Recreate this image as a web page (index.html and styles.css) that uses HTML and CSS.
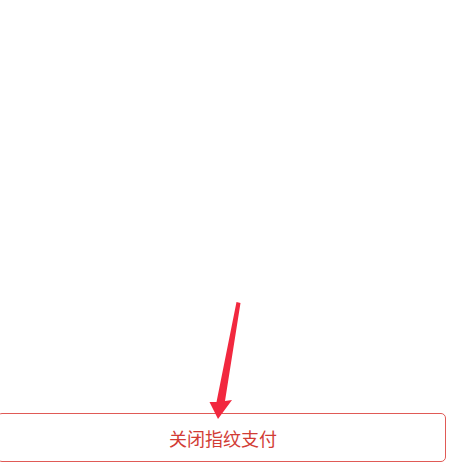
FILE: index.html
```html
<!DOCTYPE html>
<html lang="zh-CN">
<head>
<meta charset="utf-8">
<link rel="stylesheet" href="styles.css">
</head>
<body>
<div class="page">
  <div class="actions">
    <button class="btn-close">关闭指纹支付</button>
  </div>
  <svg class="arrow" width="454" height="467" viewBox="0 0 454 467">
    <path d="M236.5 302 L240.5 303 L225 401 L232 400 L218 419 L209.5 402 L216.5 402 Z" fill="#f2283f"/>
  </svg>
</div>
</body>
</html>
```

FILE: styles.css
```css
html, body {
  margin: 0;
  padding: 0;
  background: #ffffff;
}
.page {
  position: relative;
  width: 454px;
  height: 467px;
  display: flex;
  flex-direction: column;
  justify-content: flex-end;
  padding-bottom: 5px;
  box-sizing: border-box;
  overflow: hidden;
}
.actions {
  margin-left: -3px;
  width: 449px;
}
.btn-close {
  display: flex;
  align-items: center;
  justify-content: center;
  width: 100%;
  height: 49px;
  background: #fff;
  border: 1px solid #e05a56;
  border-radius: 5px;
  color: #d23c35;
  font-family: "Noto Sans CJK SC", "Noto Sans", sans-serif;
  font-size: 18px;
  padding: 0 0 0 3px;
}
.arrow {
  position: absolute;
  left: 0;
  top: 0;
  pointer-events: none;
}
```
